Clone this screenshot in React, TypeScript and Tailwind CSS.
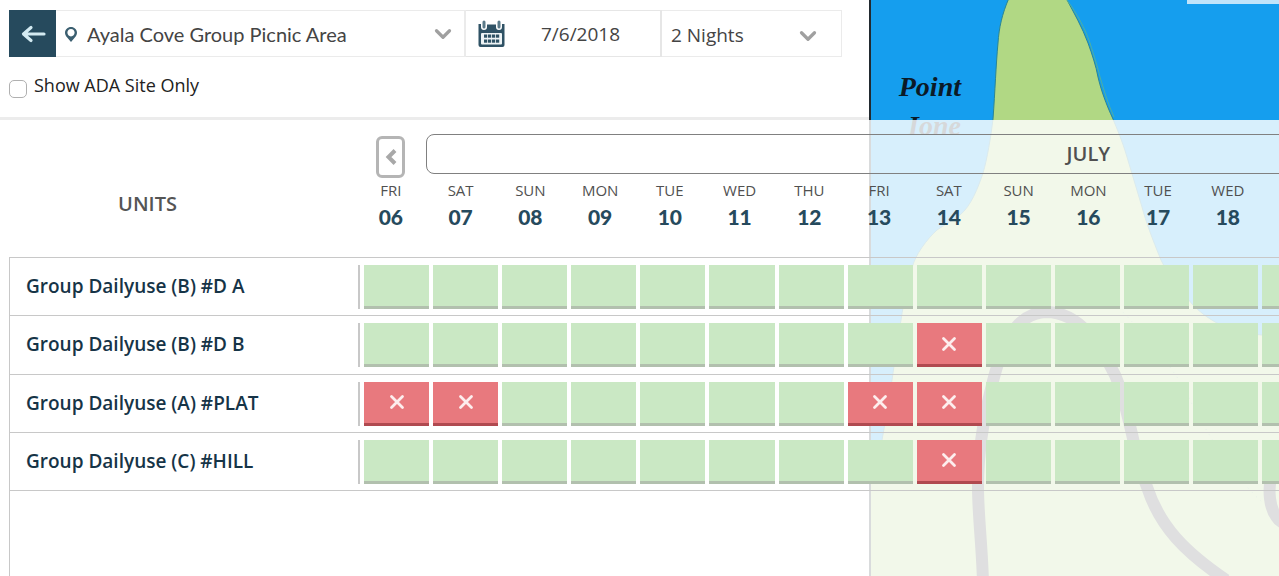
import { ChevronDown } from "lucide-react";

const weekdays = ["FRI", "SAT", "SUN", "MON", "TUE", "WED", "THU"];

const days = Array.from({ length: 20 }, (_, i) => ({
  name: weekdays[i % 7],
  date: String(i + 6).padStart(2, "0"),
}));

const units = [
  { name: "Group Dailyuse (B) #D A", booked: [] as string[] },
  { name: "Group Dailyuse (B) #D B", booked: ["14"] },
  { name: "Group Dailyuse (A) #PLAT", booked: ["06", "07", "13", "14"] },
  { name: "Group Dailyuse (C) #HILL", booked: ["14"] },
];

function BackIcon() {
  return (
    <svg viewBox="0 0 26 18" className="h-[18px] w-[26px]" aria-hidden="true">
      <path
        d="M24 9H4M11 2.500L3.500 9l7.500 6.500"
        fill="none"
        stroke="currentColor"
        strokeWidth="3.200"
        strokeLinecap="round"
        strokeLinejoin="round"
      />
    </svg>
  );
}

function PinIcon() {
  return (
    <svg viewBox="0 0 14 18" className="h-[18px] w-[14px] shrink-0" aria-hidden="true">
      <path
        fillRule="evenodd"
        fill="#3b5f70"
        d="M7 2C3.700 2 1 4.500 1 7.700c0 1.800.9 3.300 2.200 4.700L7 17l3.800-4.600C12.100 11 13 9.500 13 7.700 13 4.500 10.300 2 7 2zm0 2c2.100 0 3.600 1.500 3.600 3.600S9.100 11.400 7 11.400 3.400 9.700 3.400 7.600 4.900 4 7 4z"
      />
    </svg>
  );
}

function CalendarIcon() {
  return (
    <svg viewBox="0 0 27 28" className="h-7 w-[27px] shrink-0" aria-hidden="true">
      <path
        fill="#2f5265"
        d="M.5 4h2.500v3a3 3 0 0 0 6 0V4.500h9V7a3 3 0 0 0 6 0V4h2.500v21a2 2 0 0 1-2 2h-22a2 2 0 0 1-2-2z"
      />
      <rect x="4.500" y=".5" width="3" height="8" rx="1.500" fill="#5b7a89" />
      <rect x="19.500" y=".5" width="3" height="8" rx="1.500" fill="#5b7a89" />
      <rect x="3" y="13" width="21" height="11.500" rx="1" fill="#eef4f6" />
      <g fill="#2f5265">
        <rect x="6" y="14.500" width="3.200" height="3.200" />
        <rect x="10" y="14.500" width="3.200" height="3.200" />
        <rect x="14" y="14.500" width="3.200" height="3.200" />
        <rect x="18" y="14.500" width="3.200" height="3.200" />
        <rect x="6" y="19.500" width="3.200" height="3.200" />
        <rect x="10" y="19.500" width="3.200" height="3.200" />
        <rect x="14" y="19.500" width="3.200" height="3.200" />
        <rect x="18" y="19.500" width="3.200" height="3.200" />
      </g>
    </svg>
  );
}

function BookedIcon() {
  return (
    <svg viewBox="0 0 16 16" className="h-4 w-4" role="img" aria-label="Booked">
      <path d="M2.500 2.500l11 11M13.500 2.500l-11 11" stroke="#fdeeee" strokeWidth="2.800" strokeLinecap="round" />
    </svg>
  );
}

function ParkMap() {
  return (
    <div className="absolute inset-y-0 right-0 left-[869px] overflow-hidden bg-[#159eee]">
      <svg
        viewBox="869 0 410 576"
        preserveAspectRatio="xMinYMin slice"
        className="h-full w-full"
        role="img"
        aria-label="Park map"
      >
        <path
          d="M1009 -2C1002 14 999 28 998 43C996 64 995 92 993 119C991 136 987 160 983 173C978 188 971 206 960 215C952 221 944 225 937 230C927 239 915 255 912 268C908 283 904 300 901 320C897 342 895 360 892 380C888 400 886 420 882 440C879 456 875 470 867 482V580H1283V336C1256 336 1235 332 1217 323C1206 317 1199 311 1193 305C1182 292 1168 275 1161 260C1152 238 1146 222 1142 207C1137 190 1132 174 1127 157C1122 140 1117 129 1113 119C1106 104 1101 90 1098 77C1096 66 1092 54 1088 43C1082 27 1074 13 1066 -2Z"
          fill="#b1d884"
          stroke="#2a8595"
          strokeWidth="1"
        />
        <path d="M1067 0C1077 14 1085 28 1090 43C1094 56 1098 68 1100 77C1104 90 1108 104 1114 117" fill="none" stroke="#4fb0a0" strokeWidth="1" />
        <g fill="none" stroke="#434346" strokeWidth="12">
          <path d="M983 582C982 545 978 515 978 487C978 455 983 420 992 385C1001 348 1014 313 1046 312C1081 312 1101 347 1115 375C1123 393 1126 410 1132 434C1136 454 1140 470 1147 487C1160 527 1185 552 1226 580" />
          <path d="M1275 468C1266 485 1268 514 1283 523" />
        </g>
        <path
          d="M1119 308C1150 340 1177 372 1190 400C1205 430 1232 475 1262 502"
          fill="none"
          stroke="#6fa080"
          strokeWidth="1"
          strokeDasharray="1 5"
        />
        <g
          fill="#0b1a26"
          fontFamily="'Liberation Serif', serif"
          fontStyle="italic"
          fontWeight="700"
          fontSize="28"
          textAnchor="end"
        >
          <text x="961" y="96">Point</text>
          <text x="961" y="135">Ione</text>
        </g>
        <path d="M1187 0h92v4h-92z" fill="#c0e4fa" />
        <path d="M870 0v576" stroke="#222a30" strokeWidth="2" />
      </svg>
    </div>
  );
}

function SearchBar() {
  return (
    <header className="relative h-[120px] w-[869px] border-b-[3px] border-[#ececec] bg-white px-[9px] pt-[10px]">
      <div className="flex h-[47px] w-[833px] text-[#444]">
        <button type="button" aria-label="Back" className="flex w-[47px] items-center justify-center bg-[#264a5d] text-[#d3eaf1]">
          <BackIcon />
        </button>
        <div className="relative flex flex-1 items-center border-y border-r-2 border-[#ebebeb] pl-2">
          <PinIcon />
          <select
            aria-label="Location"
            className="h-full flex-1 appearance-none bg-transparent pl-[9px] font-['Lato',sans-serif] text-[20px] outline-none"
          >
            <option>Ayala Cove Group Picnic Area</option>
          </select>
          <ChevronDown size={26} strokeWidth={3} className="pointer-events-none absolute right-2 text-[#a0a0a0]" />
        </div>
        <div className="flex w-[196px] items-center border-y border-r-2 border-[#e6e6e6] pl-3">
          <CalendarIcon />
          <input
            type="text"
            aria-label="Arrival date"
            defaultValue="7/6/2018"
            className="h-full w-0 flex-1 bg-transparent pr-1 text-center text-[19px] outline-none"
          />
        </div>
        <div className="relative flex w-[180px] items-center border-y border-r border-[#ebebeb]">
          <select aria-label="Nights" className="h-full w-full appearance-none bg-transparent pt-1 pl-[9px] text-[19px] outline-none">
            <option>2 Nights</option>
          </select>
          <ChevronDown size={26} strokeWidth={3} className="pointer-events-none absolute right-5 mt-1 text-[#a0a0a0]" />
        </div>
      </div>
      <label className="flex w-fit items-start gap-[7px] pt-4 text-[18px] leading-6 text-[#222]">
        <input
          type="checkbox"
          className="mt-[7px] h-[18px] w-[18px] appearance-none rounded-[5px] border border-[#b0b0b0] bg-white"
        />
        Show ADA Site Only
      </label>
    </header>
  );
}

function Schedule() {
  return (
    <main className="relative flex flex-1 flex-col overflow-x-auto bg-white/83 pl-[9px] [scrollbar-width:none]">
      <table className="block w-[1742px]">
        <thead className="block h-[137px]">
          <tr className="grid grid-cols-[347px_repeat(20,minmax(0,1fr))]">
            <th className="row-span-2 pt-[69px] pr-[70px] text-[20px] font-semibold text-[#555]">
              UNITS
            </th>
            <th className="flex h-[54px] justify-center pt-4">
              <button
                type="button"
                aria-label="Previous dates"
                className="flex h-[42px] w-[29px] shrink-0 items-center justify-center rounded-md border-[3px] border-[#b5b5b5] text-[#a8a8a8]"
              >
                <svg viewBox="0 0 12 18" className="h-[18px] w-3" aria-hidden="true">
                  <path d="M10 2.500L3.500 9l6.500 6.500" fill="none" stroke="currentColor" strokeWidth="4" />
                </svg>
              </button>
            </th>
            <th className="col-[span_19] h-[54px] pt-[14px]">
              <div className="flex h-10 items-center justify-center rounded-lg border border-[#808080] text-[20px] font-semibold text-[#505050]">
                JULY
              </div>
            </th>
            {days.map((day) => (
              <th key={day.date} className="pt-1 font-normal">
                <span className="block text-[15px] leading-6 text-[#505050]">{day.name}</span>
                <span className="block font-['Lato_Black','Lato',sans-serif] text-[21px] leading-[30px] font-black text-[#264a5d]">
                  {day.date}
                </span>
              </th>
            ))}
          </tr>
        </thead>
        <tbody className="grid h-[234px] grid-rows-4 border-t border-l border-[#c8c8c8]">
          {units.map((unit) => (
            <tr
              key={unit.name}
              className="grid w-[1732px] grid-cols-[350px_repeat(20,minmax(0,1fr))] gap-x-1 border-b border-[#c8c8c8] pt-[7px]"
            >
              <th
                scope="row"
                className="h-11 border-r-2 border-[#c8c8c8] pl-4 text-left text-[19px] leading-[42px] font-semibold text-[#163447]"
              >
                {unit.name}
              </th>
              {days.map((day) =>
                unit.booked.includes(day.date) ? (
                  <td key={day.date} className="flex h-11 items-center justify-center border-b-[3px] border-[#b04a50] bg-[#e8797e]">
                    <BookedIcon />
                  </td>
                ) : (
                  <td key={day.date} className="h-11 border-b-[3px] border-[#b2c0ae] bg-[#cae8c4]" />
                ),
              )}
            </tr>
          ))}
        </tbody>
      </table>
      <div className="flex-1 border-l border-[#c8c8c8]" />
    </main>
  );
}

export default function App() {
  return (
    <div className="relative flex min-h-screen flex-col overflow-hidden bg-white font-['Open_Sans','Noto_Sans',sans-serif]">
      <ParkMap />
      <SearchBar />
      <Schedule />
    </div>
  );
}
